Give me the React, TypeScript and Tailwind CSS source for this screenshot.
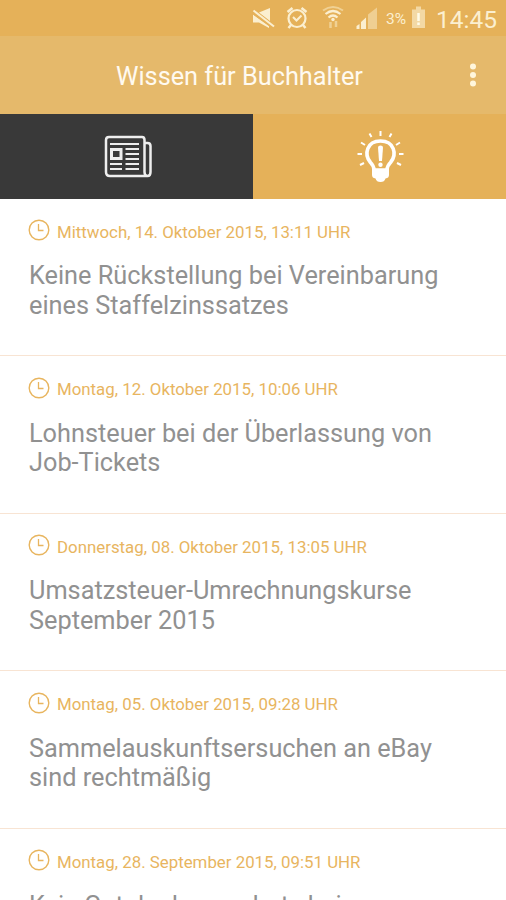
const articles = [
  { date: "Mittwoch, 14. Oktober 2015, 13:11 UHR", lines: ["Keine Rückstellung bei Vereinbarung", "eines Staffelzinssatzes"] },
  { date: "Montag, 12. Oktober 2015, 10:06 UHR", lines: ["Lohnsteuer bei der Überlassung von", "Job-Tickets"] },
  { date: "Donnerstag, 08. Oktober 2015, 13:05 UHR", lines: ["Umsatzsteuer-Umrechnungskurse", "September 2015"] },
  { date: "Montag, 05. Oktober 2015, 09:28 UHR", lines: ["Sammelauskunftsersuchen an eBay", "sind rechtmäßig"] },
  { date: "Montag, 28. September 2015, 09:51 UHR", lines: ["Kein Gutglaubensschutz bei"] },
];

function StatusIcons() {
  return (
    <svg width="140" height="36" viewBox="0 0 140 36" fill="none" className="shrink-0">
      {/* Muted speaker */}
      <path d="M13 12.500L24 8v13zM7 14.500l16 11.500v2L13 22.500H7z" fill="#fbefd0" />
      <path d="M7 12l20 14.500" stroke="#e5b159" strokeWidth="4" />
      <path d="M7.500 10.500L28 26.500" stroke="#fbefd0" strokeWidth="2" />

      {/* Alarm clock */}
      <circle cx="51" cy="18.500" r="8.500" stroke="#fbefd0" strokeWidth="2.200" />
      <path d="M41.500 12l5-4M60.500 12l-5-4M45 25l-2.500 3M57 25l2.500 3" stroke="#fbefd0" strokeWidth="2.500" />
      <path d="M47 17l3.500 3.500 5-5" stroke="#fbefd0" strokeWidth="2" />

      {/* Wifi */}
      <path d="M77 10.500q10-7 20 0" stroke="#f0d194" strokeWidth="2" />
      <path d="M79.500 14q7.500-6 15 0M82.500 17.500q4.500-4 9 0" stroke="#fbefd0" strokeWidth="2.200" />
      <circle cx="87" cy="19.500" r="1.700" fill="#fbefd0" />
      <path d="M84.500 22v6M90 21v6" stroke="#f0d194" strokeWidth="2.500" />

      {/* Signal */}
      <path d="M122 14.500l9-7V29h-9z" fill="#efcf92" />
      <path d="M110.500 26l3-2v5h-3zM115 22l5-4.500V29h-5z" fill="#fbefd0" />
    </svg>
  );
}

function StatusBar() {
  return (
    <div className="flex h-9 shrink-0 items-center bg-[#e5b159] pl-[246px] text-[#fbefd0]">
      <StatusIcons />
      <span className="w-[25px] pt-[3px] text-[15.5px] leading-none">3%</span>
      <svg width="16" height="36" viewBox="0 0 16 36" fill="none" className="shrink-0">
        <path d="M1 9.500h4V6.500h5v3h4V28H1z" fill="#f3d9a5" />
        <path d="M7.500 13v8M7.500 22.500v2.500" stroke="#fffbe8" strokeWidth="2.500" />
      </svg>
      <span className="ml-[9px] pt-1 text-[24.5px] leading-none">14:45</span>
    </div>
  );
}

function NewsIcon() {
  return (
    <svg width="50" height="44" viewBox="0 0 50 44" fill="none" stroke="#eeeeee" strokeWidth="2.500">
      <path d="M45 42H8q-4 0-4-4V6q0-3 3-3h33q2.500 0 2.500 3v32q0 4 3 4 3 0 3-4V12q0-3-3-3h-3" />
      <path d="M8 10h29M23.500 15H37M23.500 20H37M23.500 25H37M8 30h12M23.500 30H37M8 35h12M23.500 35H37" strokeWidth="2" />
      <path d="M9.500 15.500h9.500v9H9.500z" strokeWidth="3" />
    </svg>
  );
}

function BulbIcon() {
  return (
    <svg width="50" height="54" viewBox="0 0 50 54" fill="none" stroke="#ffffff">
      <path d="M19 41q0-4-3.500-7.500C8.500 25 12 12 25.500 12s17 13 10 21.500Q32 37 32 41z" strokeWidth="3.600" />
      <path d="M17 40h17v6q0 3-3.500 3.500-1 3.500-5 3.500t-5-3.500Q17 49 17 46z" fill="#ffffff" stroke="none" />
      <path d="M23 18.500q0-2 2.500-2t2.500 2L27 32h-3z" fill="#ffffff" stroke="none" />
      <circle cx="25.500" cy="35.700" r="2.200" fill="#ffffff" stroke="none" />
      <path d="M25.500 2v5M14.500 4.500l2 3.500M36.500 4.500l-2 3.500M6 13.500l4 2.500M45 13.500L41 16M2.500 25H7M48.500 25H44M5 36l4-2M46 36l-4-2" strokeWidth="2" />
    </svg>
  );
}

function ClockIcon() {
  return (
    <svg width="22" height="22" viewBox="0 0 22 22" fill="none" stroke="#e8b55f" className="shrink-0">
      <circle cx="11" cy="11" r="9.800" strokeWidth="1.400" />
      <path d="M10.500 5v6.500h5" strokeWidth="1.300" />
    </svg>
  );
}

export default function App() {
  return (
    <div className="flex h-[900px] w-[506px] flex-col overflow-hidden bg-white font-['Roboto',sans-serif]">
      <StatusBar />

      {/* Toolbar */}
      <header className="grid h-[78px] shrink-0 grid-cols-[66px_1fr_66px] items-center bg-[#e5b96b] text-[#fffaf0]">
        <span />
        <h1 className="whitespace-nowrap pl-[50px] pt-1 text-[25.3px] leading-none">Wissen für Buchhalter</h1>
        <svg width="66" height="78" viewBox="0 0 66 78" fill="#fff6dc">
          <circle cx="33" cy="30.500" r="3" />
          <circle cx="33" cy="39" r="3" />
          <circle cx="33" cy="47.500" r="3" />
        </svg>
      </header>

      {/* Tabs */}
      <nav className="grid h-[84.5px] shrink-0 grid-cols-2">
        <button className="flex items-center justify-center bg-[#393939]">
          <NewsIcon />
        </button>
        <button className="flex items-center justify-center bg-[#e5b159]">
          <BulbIcon />
        </button>
      </nav>

      {/* Articles */}
      <main>
        {articles.map((article) => (
          <article key={article.date} className="h-[157.5px] border-b border-[#f8e4d3] pl-7 pt-[20.5px]">
            <div className="flex h-[22px] items-center gap-[7px] text-[#e8b55f]">
              <ClockIcon />
              <time className="whitespace-nowrap pt-1 text-[16.85px] leading-none">{article.date}</time>
            </div>
            <h2 className="mt-5 whitespace-nowrap pl-px text-[25.3px] leading-[29.5px] text-[#919191]">
              {article.lines.map((line) => (
                <span key={line} className="block">{line}</span>
              ))}
            </h2>
          </article>
        ))}
      </main>
    </div>
  );
}
